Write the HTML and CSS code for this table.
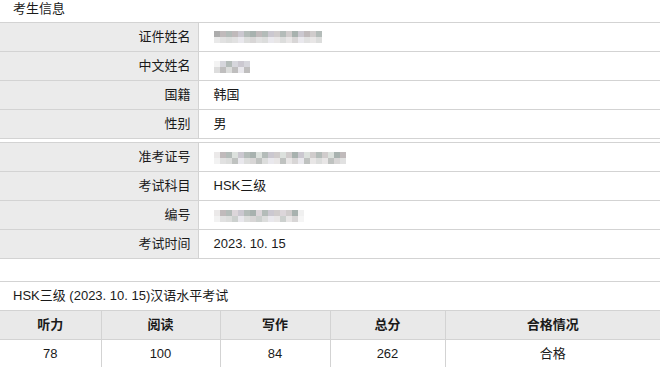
FILE: index.html
```html
<!DOCTYPE html>
<html lang="zh">
<head>
<meta charset="utf-8">
<title>考生信息</title>
<link rel="stylesheet" href="styles.css">
</head>
<body>
<div class="sec-title">考生信息</div>
<table class="info">
  <tr><th>证件姓名</th><td><span class="blur b1"><i></i><i></i><i></i><i></i><i></i><i></i><i></i><i></i><i></i><i></i><i></i><i></i><i></i><i></i><i></i><i></i><i></i><i></i></span></td></tr>
  <tr><th>中文姓名</th><td><span class="blur b2"><i></i><i></i><i></i><i></i><i></i><i></i></span></td></tr>
  <tr><th>国籍</th><td>韩国</td></tr>
  <tr><th>性别</th><td>男</td></tr>
</table>
<table class="info second">
  <tr><th>准考证号</th><td><span class="blur b3"><i></i><i></i><i></i><i></i><i></i><i></i><i></i><i></i><i></i><i></i><i></i><i></i><i></i><i></i><i></i><i></i><i></i><i></i><i></i><i></i><i></i><i></i></span></td></tr>
  <tr><th>考试科目</th><td>HSK三级</td></tr>
  <tr><th>编号</th><td><span class="blur b4"><i></i><i></i><i></i><i></i><i></i><i></i><i></i><i></i><i></i><i></i><i></i><i></i><i></i><i></i><i></i></span></td></tr>
  <tr><th>考试时间</th><td>2023. 10. 15</td></tr>
</table>
<table class="score">
  <colgroup><col class="c1"><col class="c2"><col class="c3"><col class="c4"><col class="c5"></colgroup>
  <tr><td class="caption" colspan="5">HSK三级 (2023. 10. 15)汉语水平考试</td></tr>
  <tr class="head"><th>听力</th><th>阅读</th><th>写作</th><th>总分</th><th>合格情况</th></tr>
  <tr><td>78</td><td>100</td><td>84</td><td>262</td><td>合格</td></tr>
</table>
</body>
</html>
```

FILE: styles.css
```css
html, body {
  margin: 0;
  padding: 0;
  background: #fff;
}
body {
  font-family: "Liberation Sans", Arial, "Noto Sans CJK SC", sans-serif;
  font-size: 13px;
  color: #1a1a1a;
}
.sec-title {
  height: 22px;
  line-height: 17px;
  padding-left: 13px;
  box-sizing: border-box;
}
table {
  border-collapse: collapse;
  width: 660px;
  table-layout: fixed;
}
.info {
  border-top: 1px solid #d3d3d3;
}
.info th, .info td {
  height: 29px;
  box-sizing: border-box;
  padding: 0;
  border-bottom: 1px solid #d3d3d3;
  font-weight: normal;
  vertical-align: middle;
  line-height: 16px;
}
.info th {
  width: 198px;
  box-sizing: border-box;
  padding-right: 7px;
  background: #ebebeb;
  text-align: right;
  border-right: 1px solid #d3d3d3;
}
.info td {
  padding-left: 15px;
}
.info.second {
  margin-top: 3px;
}
.blur {
  display: inline-flex;
  vertical-align: middle;
  height: 12px;
  opacity: 0.85;
}
.blur i {
  display: block;
  width: 6px;
  height: 12px;
  background: linear-gradient(#c8c4c4 50%, #e4e2e2 50%);
}
.blur i:nth-child(2n) { background: linear-gradient(#b6aeb0 50%, #dcdcdc 50%); }
.blur i:nth-child(3n) { background: linear-gradient(#a8b1ad 50%, #d6d8d6 50%); }
.blur i:nth-child(5n) { background: linear-gradient(#c3bfc8 50%, #e6e4ea 50%); }
.blur i:nth-child(7n) { background: linear-gradient(#9aa5a2 50%, #d2d0d0 50%); }
.blur i:first-child { background: linear-gradient(#e8e6e6 50%, #f0f0f0 50%); }
.b1 { margin-top: -1px; }
.b1 i:nth-child(1) { background: linear-gradient(#9e9e9e 50%, #e6e6e6 50%); }
.b2 i { background: linear-gradient(#e0dede 50%, #9c9aa0 50%); }
.b2 i:nth-child(2n) { background: linear-gradient(#cfcfd6 50%, #b5b3b3 50%); }
.b2 i:first-child { background: linear-gradient(#f2f2f2 50%, #d8d8d8 50%); }
.b3 i:nth-child(4n) { background: linear-gradient(#d6dcd8 50%, #b4b8b6 50%); }
.b4 i:nth-child(4n) { background: linear-gradient(#d6d0d4 50%, #c4c8c6 50%); }
.b4 i:last-child { background: linear-gradient(#eeeeee 50%, #f4f4f4 50%); }
.score {
  margin-top: 22px;
  border-top: 1px solid #d3d3d3;
}
.score td, .score th {
  height: 29px;
  box-sizing: border-box;
  padding: 0;
  text-align: center;
  vertical-align: middle;
  line-height: 16px;
  border: 1px solid #d3d3d3;
  border-top: 0;
}
.score td.caption {
  text-align: left;
  padding-left: 13px;
  border-left: 0;
  border-right: 0;
}
.score tr > :first-child { border-left: 0; }
.score tr > :last-child { border-right: 0; }
.score .head th {
  background: #e9e9e9;
  font-weight: bold;
}
.c1 { width: 101px; }
.c2 { width: 119px; }
.c3 { width: 110px; }
.c4 { width: 115px; }
.c5 { width: 215px; }
```
